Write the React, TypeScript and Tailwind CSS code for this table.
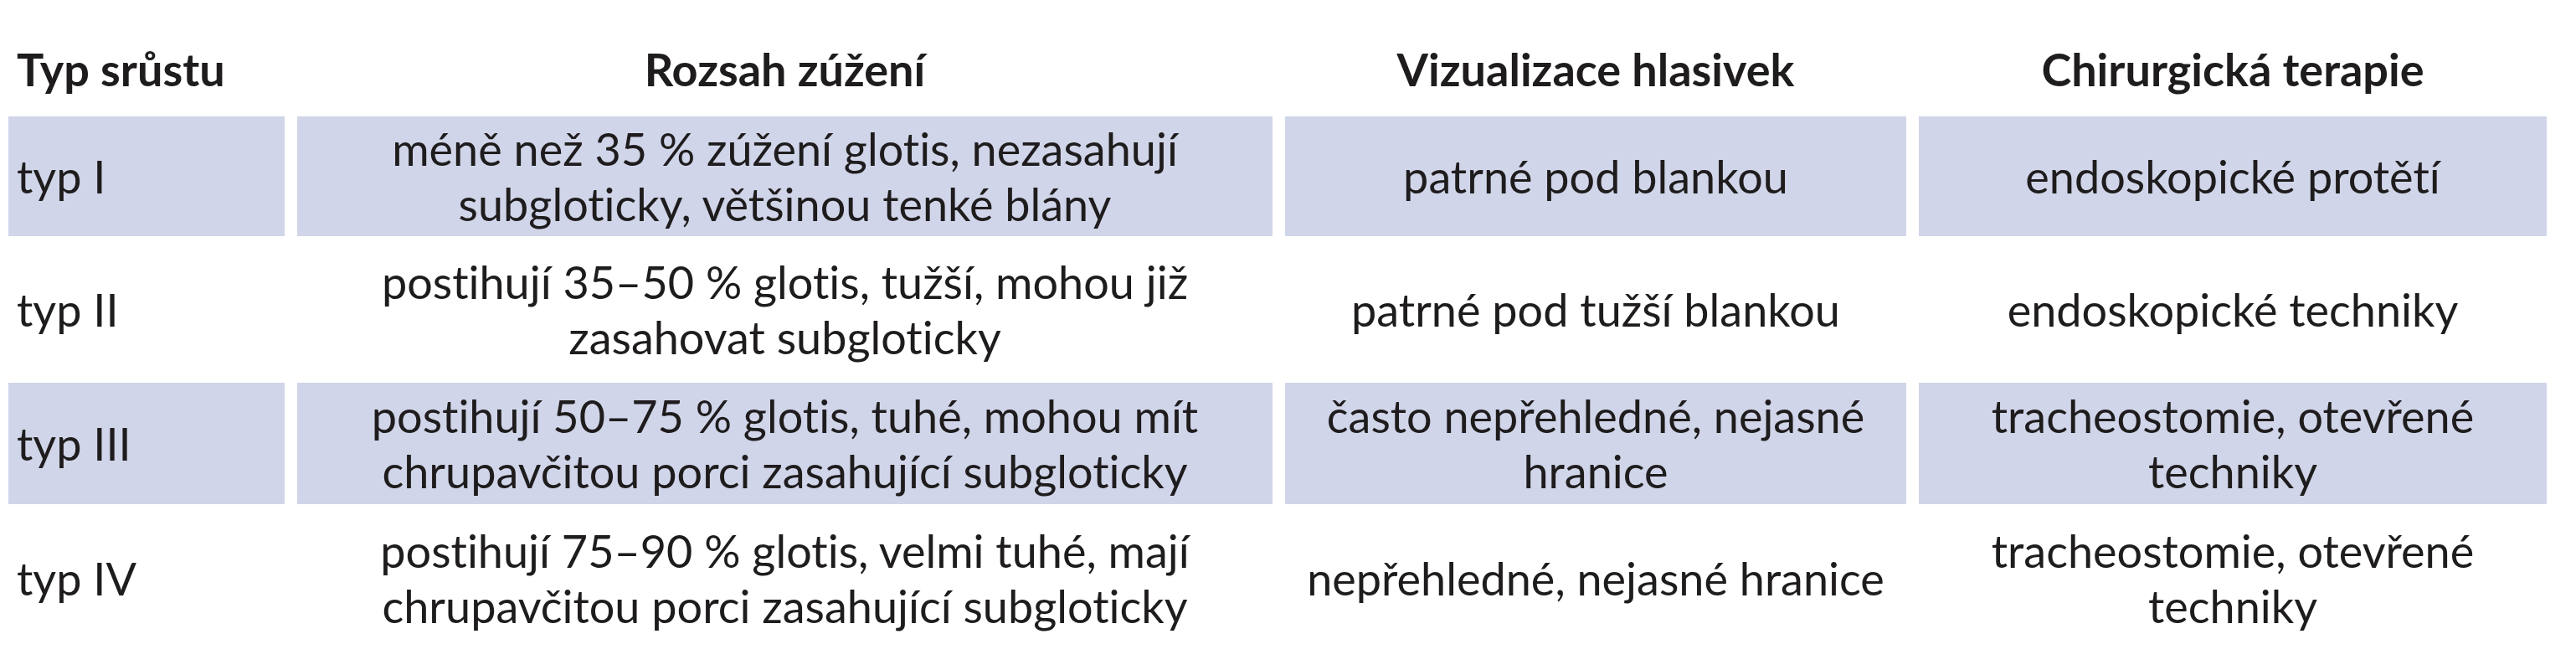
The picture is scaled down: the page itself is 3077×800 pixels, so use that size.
import React from "react";

type Row = { typ: string; rozsah: string[]; viz: string[]; ter: string[]; shaded: boolean; h: string };

const rows: Row[] = [
  {
    typ: "typ I",
    rozsah: ["méně než 35 % zúžení glotis, nezasahují", "subgloticky, většinou tenké blány"],
    viz: ["patrné pod blankou"],
    ter: ["endoskopické protětí"],
    shaded: true,
    h: "h-[143px]",
  },
  {
    typ: "typ II",
    rozsah: ["postihují 35–50 % glotis, tužší, mohou již", "zasahovat subgloticky"],
    viz: ["patrné pod tužší blankou"],
    ter: ["endoskopické techniky"],
    shaded: false,
    h: "h-[143px]",
  },
  {
    typ: "typ III",
    rozsah: ["postihují 50–75 % glotis, tuhé, mohou mít", "chrupavčitou porci zasahující subgloticky"],
    viz: ["často nepřehledné, nejasné", "hranice"],
    ter: ["tracheostomie, otevřené", "techniky"],
    shaded: true,
    h: "h-[145px]",
  },
  {
    typ: "typ IV",
    rozsah: ["postihují 75–90 % glotis, velmi tuhé, mají", "chrupavčitou porci zasahující subgloticky"],
    viz: ["nepřehledné, nejasné hranice"],
    ter: ["tracheostomie, otevřené", "techniky"],
    shaded: false,
    h: "h-[145px]",
  },
];

function Lines({ lines }: { lines: string[] }) {
  return (
    <>
      {lines.map((l, i) => (
        <span key={i} className="block whitespace-nowrap">
          {l}
        </span>
      ))}
    </>
  );
}

export default function App() {
  return (
    <div className="w-[3077px] h-[800px] bg-white overflow-hidden font-['Lato','Liberation_Sans',sans-serif] [font-variant-ligatures:none] text-[#1f1c1d] text-[54px] leading-[66px]">
      <div className="grid grid-cols-[330px_1165px_742px_750px] gap-x-[15px] gap-y-[16px] pl-[10px]">
        <div className="h-[123px] flex items-end pb-[7px] pl-[10px] font-bold">Typ srůstu</div>
        <div className="h-[123px] flex items-end justify-center pb-[7px] font-bold">Rozsah zúžení</div>
        <div className="h-[123px] flex items-end justify-center pb-[7px] font-bold">Vizualizace hlasivek</div>
        <div className="h-[123px] flex items-end justify-center pb-[7px] font-bold">Chirurgická terapie</div>
        {rows.map((r) => {
          const bg = r.shaded ? "bg-[#d0d5e9]" : "bg-white";
          return (
            <React.Fragment key={r.typ}>
              <div className={`${r.h} ${bg} flex items-center pl-[10px]`}>{r.typ}</div>
              <div className={`${r.h} ${bg} flex flex-col items-center justify-center text-center`}>
                <Lines lines={r.rozsah} />
              </div>
              <div className={`${r.h} ${bg} flex flex-col items-center justify-center text-center`}>
                <Lines lines={r.viz} />
              </div>
              <div className={`${r.h} ${bg} flex flex-col items-center justify-center text-center`}>
                <Lines lines={r.ter} />
              </div>
            </React.Fragment>
          );
        })}
      </div>
    </div>
  );
}
